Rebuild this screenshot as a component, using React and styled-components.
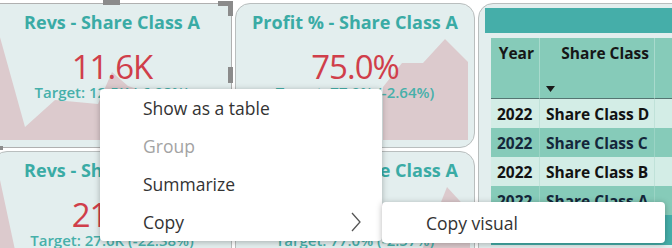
import React from 'react';
import styled, { createGlobalStyle } from 'styled-components';

const GlobalStyle = createGlobalStyle`
  html, body {
    margin: 0;
    padding: 0;
    background: #ffffff;
    overflow: hidden;
  }
  body {
    font-family: "Open Sans", "Noto Sans", sans-serif;
  }
`;

const Page = styled.div`
  position: relative;
  width: 672px;
  height: 248px;
  overflow: hidden;
`;

const Grid = styled.div`
  display: grid;
  grid-template-columns: 240px 240px 240px;
  grid-template-rows: 145px 145px;
  column-gap: 3px;
  row-gap: 3px;
  padding-top: 3px;
  margin-left: -8px;
`;

const Card = styled.div`
  position: relative;
  box-sizing: border-box;
  background: #e3eeee;
  border: 1px solid ${p => (p.$selected ? '#b0b0b0' : '#b9bebe')};
  border-radius: ${p => (p.$selected ? '0' : '15px')};
  overflow: ${p => (p.$selected ? 'visible' : 'hidden')};
  display: flex;
  flex-direction: column;
  align-items: center;
  padding-top: 6px;
`;

const Chart = styled.svg`
  position: absolute;
  left: 0;
  top: 0;
  width: 100%;
  height: 100%;
  overflow: hidden;
`;

const Title = styled.div`
  position: relative;
  font-size: 18px;
  line-height: 24px;
  font-weight: 700;
  color: #3aaba5;
  white-space: nowrap;
`;

const Value = styled.div`
  position: relative;
  margin-top: 15px;
  font-size: 33px;
  line-height: 36px;
  color: #d03e4a;
  letter-spacing: -1px;
  white-space: nowrap;
`;

const Target = styled.div`
  position: relative;
  margin-top: -2px;
  font-size: 15px;
  line-height: 18px;
  font-weight: 600;
  color: #47b0aa;
  white-space: nowrap;
`;

const Handle = styled.div`
  position: absolute;
  left: ${p => p.$x}px;
  top: ${p => p.$y}px;
  width: ${p => p.$w}px;
  height: ${p => p.$h}px;
  background: #8b8b8b;
`;

const TableCard = styled.div`
  grid-column: 3;
  grid-row: 1 / span 2;
  box-sizing: border-box;
  background: #e3eeee;
  border: 1px solid #b9bebe;
  border-radius: 15px;
  overflow: hidden;
  padding: 4px 0 0 6px;
  display: flex;
  flex-direction: column;
`;

const TitleBar = styled.div`
  height: 25px;
  background: #45aea9;
`;

const Table = styled.div`
  margin: 5px 0 0 6px;
  display: grid;
  grid-template-columns: 49px 115px 1fr;
  font-family: "Open Sans", "Noto Sans", sans-serif;
  font-weight: 700;
  font-size: 15.5px;
`;

const HeadCell = styled.div`
  box-sizing: border-box;
  height: 61px;
  background: #86cbb9;
  border-right: 1px solid #a9dacd;
  border-bottom: 1px solid #557572;
  padding: 5px 5px 6px 6px;
  display: flex;
  flex-direction: column;
  justify-content: space-between;
  align-items: flex-end;
  color: #161616;
  line-height: 20px;
`;

const SortMark = styled.svg`
  align-self: flex-start;
  width: 9px;
  height: 6px;
`;

const Cell = styled.div`
  box-sizing: border-box;
  height: 29px;
  background: ${p => (p.$alt ? '#86cbb9' : '#d3ede6')};
  border-right: 1px solid ${p => (p.$alt ? '#9bd4c5' : '#c0e2d9')};
  padding: 0 6px;
  display: flex;
  align-items: center;
  color: ${p => (p.$alt ? '#14263a' : '#121212')};
  white-space: nowrap;
`;

const TotalRow = styled.div`
  grid-column: 1 / span 3;
  height: 30px;
  background: #45aea9;
`;

const Menu = styled.div`
  position: absolute;
  left: ${p => p.$x}px;
  top: ${p => p.$y}px;
  width: ${p => p.$w}px;
  background: #ffffff;
  border-radius: 4px;
  box-shadow: 0 1px 6px rgba(0, 0, 0, 0.28);
  font-family: "Open Sans", "Noto Sans", sans-serif;
  font-size: 17.5px;
`;

const MenuItem = styled.div`
  height: ${p => p.$h || 38}px;
  padding: 0 20px 0 ${p => p.$indent}px;
  display: flex;
  align-items: center;
  justify-content: space-between;
  color: ${p => (p.$disabled ? '#a3a3a3' : '#333333')};
`;

const rows = [
  { year: '2022', cls: 'Share Class D' },
  { year: '2022', cls: 'Share Class C' },
  { year: '2022', cls: 'Share Class B' },
  { year: '2022', cls: 'Share Class A' },
];

function KpiCard({ title, value, target, shape, selected, children }) {
  return (
    <Card $selected={selected}>
      <Chart viewBox="0 0 238 143" preserveAspectRatio="none">
        <polygon points={shape} fill="#dccacd" />
      </Chart>
      <Title>{title}</Title>
      <Value>{value}</Value>
      <Target>{target}</Target>
      {children}
    </Card>
  );
}

export default function App() {
  return (
    <Page>
      <GlobalStyle />
      <Grid>
        <KpiCard
          selected
          title="Revs - Share Class A"
          value="11.6K"
          target="Target: 12.5K (-6.98%)"
          shape="0,8 32,123 62,96 105,100 119,68 135,82 177,96 232,86 232,136 0,136"
        >
          <Handle $x={110} $y={-4} $w={17} $h={5} />
          <Handle $x={225} $y={-3} $w={15} $h={5} />
          <Handle $x={235} $y={-3} $w={5} $h={15} />
          <Handle $x={235} $y={63} $w={5} $h={16} />
          <Handle $x={-1} $y={142} $w={11} $h={4} />
        </KpiCard>
        <KpiCard
          title="Profit % - Share Class A"
          value="75.0%"
          target="Target: 77.0% (-2.64%)"
          shape="147,136 147,83 166,59 187,59 209,35 232,58 232,136"
        />
        <TableCard>
          <TitleBar />
          <Table>
            <HeadCell>Year</HeadCell>
            <HeadCell>
              Share Class
              <SortMark viewBox="0 0 9 6">
                <polygon points="0,0 9,0 4.5,6" fill="#1a1a1a" />
              </SortMark>
            </HeadCell>
            <HeadCell />
            {rows.map((r, i) => (
              <React.Fragment key={r.cls}>
                <Cell $alt={i % 2 === 1}>{r.year}</Cell>
                <Cell $alt={i % 2 === 1}>{r.cls}</Cell>
                <Cell $alt={i % 2 === 1} />
              </React.Fragment>
            ))}
            <TotalRow />
          </Table>
        </TableCard>
        <KpiCard
          title="Revs - Share Class A"
          value="21.5K"
          target="Target: 27.6K (-22.38%)"
          shape="0,13 7,28 22,98 22,143 0,143"
        />
        <KpiCard
          title="Profit % - Share Class A"
          value="75.0%"
          target="Target: 77.0% (-2.57%)"
          shape="182,108 211,35 234,60 234,143 182,143"
        />
      </Grid>

      <Menu $x={100} $y={89} $w={282}>
        <MenuItem $indent={43}>Show as a table</MenuItem>
        <MenuItem $indent={43} $disabled>Group</MenuItem>
        <MenuItem $indent={43}>Summarize</MenuItem>
        <MenuItem $indent={43}>
          Copy
          <svg width="12" height="20" viewBox="0 0 12 20">
            <polyline points="2,1 10,10 2,19" fill="none" stroke="#555555" strokeWidth="1.3" />
          </svg>
        </MenuItem>
      </Menu>

      <Menu $x={382} $y={202} $w={283}>
        <MenuItem $indent={44} $h={41}>Copy visual</MenuItem>
      </Menu>
    </Page>
  );
}
